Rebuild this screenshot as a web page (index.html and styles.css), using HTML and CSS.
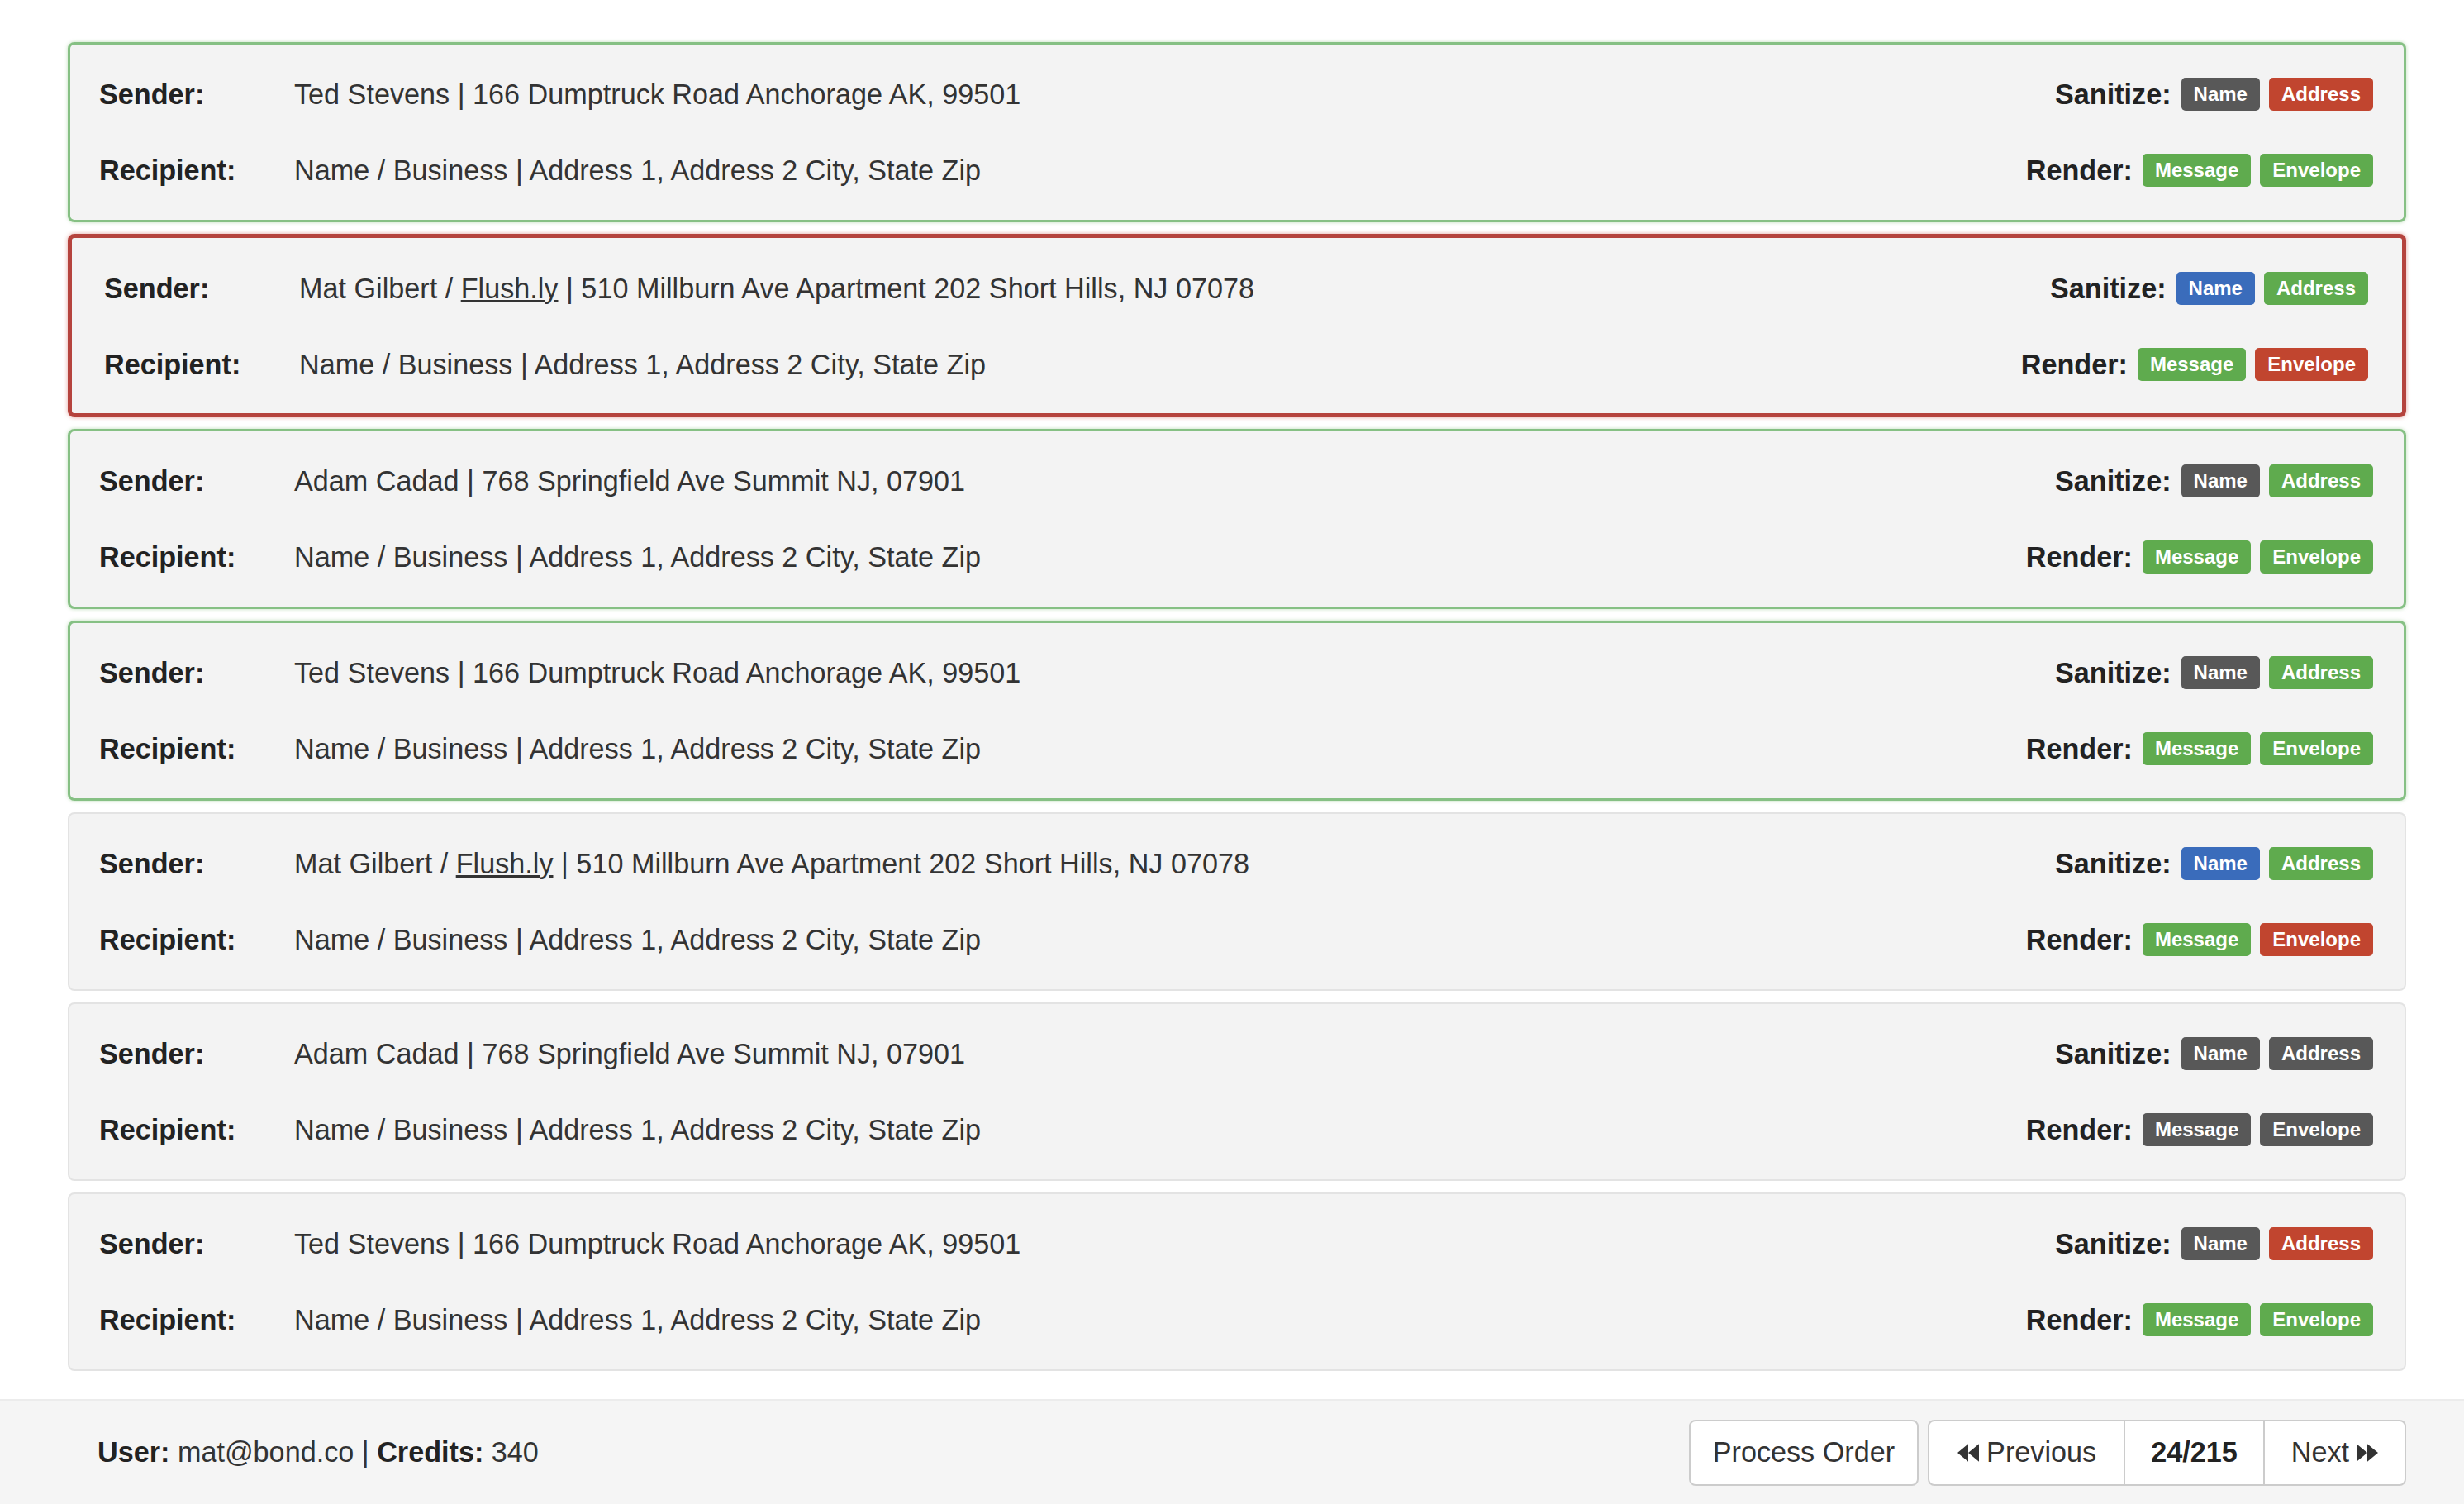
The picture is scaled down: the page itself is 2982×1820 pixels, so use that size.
FILE: index.html
```html
<!DOCTYPE html>
<html>
<head>
<meta charset="utf-8">
<link rel="stylesheet" href="styles.css">
</head>
<body>
<main class="list">
  <section class="card ok">
    <div class="lbl">Sender:</div><div class="val">Ted Stevens | 166 Dumptruck Road Anchorage AK, 99501</div>
    <div class="ctl"><b>Sanitize:</b><span class="badge gray">Name</span><span class="badge red">Address</span></div>
    <div class="lbl">Recipient:</div><div class="val">Name / Business | Address 1, Address 2 City, State Zip</div>
    <div class="ctl"><b>Render:</b><span class="badge green">Message</span><span class="badge green">Envelope</span></div>
  </section>
  <section class="card bad">
    <div class="lbl">Sender:</div><div class="val">Mat Gilbert / <a href="#">Flush.ly</a> | 510 Millburn Ave Apartment 202 Short Hills, NJ 07078</div>
    <div class="ctl"><b>Sanitize:</b><span class="badge blue">Name</span><span class="badge green">Address</span></div>
    <div class="lbl">Recipient:</div><div class="val">Name / Business | Address 1, Address 2 City, State Zip</div>
    <div class="ctl"><b>Render:</b><span class="badge green">Message</span><span class="badge red">Envelope</span></div>
  </section>
  <section class="card ok">
    <div class="lbl">Sender:</div><div class="val">Adam Cadad | 768 Springfield Ave Summit NJ, 07901</div>
    <div class="ctl"><b>Sanitize:</b><span class="badge gray">Name</span><span class="badge green">Address</span></div>
    <div class="lbl">Recipient:</div><div class="val">Name / Business | Address 1, Address 2 City, State Zip</div>
    <div class="ctl"><b>Render:</b><span class="badge green">Message</span><span class="badge green">Envelope</span></div>
  </section>
  <section class="card ok">
    <div class="lbl">Sender:</div><div class="val">Ted Stevens | 166 Dumptruck Road Anchorage AK, 99501</div>
    <div class="ctl"><b>Sanitize:</b><span class="badge gray">Name</span><span class="badge green">Address</span></div>
    <div class="lbl">Recipient:</div><div class="val">Name / Business | Address 1, Address 2 City, State Zip</div>
    <div class="ctl"><b>Render:</b><span class="badge green">Message</span><span class="badge green">Envelope</span></div>
  </section>
  <section class="card">
    <div class="lbl">Sender:</div><div class="val">Mat Gilbert / <a href="#">Flush.ly</a> | 510 Millburn Ave Apartment 202 Short Hills, NJ 07078</div>
    <div class="ctl"><b>Sanitize:</b><span class="badge blue">Name</span><span class="badge green">Address</span></div>
    <div class="lbl">Recipient:</div><div class="val">Name / Business | Address 1, Address 2 City, State Zip</div>
    <div class="ctl"><b>Render:</b><span class="badge green">Message</span><span class="badge red">Envelope</span></div>
  </section>
  <section class="card">
    <div class="lbl">Sender:</div><div class="val">Adam Cadad | 768 Springfield Ave Summit NJ, 07901</div>
    <div class="ctl"><b>Sanitize:</b><span class="badge gray">Name</span><span class="badge gray">Address</span></div>
    <div class="lbl">Recipient:</div><div class="val">Name / Business | Address 1, Address 2 City, State Zip</div>
    <div class="ctl"><b>Render:</b><span class="badge gray">Message</span><span class="badge gray">Envelope</span></div>
  </section>
  <section class="card">
    <div class="lbl">Sender:</div><div class="val">Ted Stevens | 166 Dumptruck Road Anchorage AK, 99501</div>
    <div class="ctl"><b>Sanitize:</b><span class="badge gray">Name</span><span class="badge red">Address</span></div>
    <div class="lbl">Recipient:</div><div class="val">Name / Business | Address 1, Address 2 City, State Zip</div>
    <div class="ctl"><b>Render:</b><span class="badge green">Message</span><span class="badge green">Envelope</span></div>
  </section>
</main>
<footer class="bar">
  <div class="user"><b>User:</b> mat@bond.co | <b>Credits:</b> 340</div>
  <div class="actions">
    <button class="btn">Process Order</button>
    <div class="group">
      <button class="btn prev"><svg class="ico" viewBox="0 0 24 20"><path d="M12 0 L12 20 L0 10 Z M24 0 L24 20 L12 10 Z"/></svg>Previous</button>
      <button class="btn strong">24/215</button>
      <button class="btn next">Next<svg class="ico after" viewBox="0 0 24 20"><path d="M0 0 L0 20 L12 10 Z M12 0 L12 20 L24 10 Z"/></svg></button>
    </div>
  </div>
</footer>
</body>
</html>
```
FILE: styles.css
```css
html, body {
  margin: 0;
  padding: 0;
  background: #ffffff;
}
body {
  font-family: "Liberation Sans", Arial, Helvetica, sans-serif;
  font-size: 34.2px;
  color: #333333;
}
.list {
  display: flex;
  flex-direction: column;
  gap: 14px;
  padding: 51px 70px 34px 82px;
}
.card {
  box-sizing: border-box;
  height: 216px;
  background: #f3f3f3;
  border: 2px solid #e3e3e3;
  border-radius: 8px;
  padding: 35px 38px 35px 36px;
  display: grid;
  grid-template-columns: 236px 1fr auto;
  grid-template-rows: 50px 50px;
  row-gap: 42px;
  align-items: center;
}
.card.ok {
  height: 218px;
  border: 3px solid #86c084;
  box-shadow: 0 0 4px rgba(110, 180, 100, 0.45);
  padding: 35px 37px 35px 35px;
}
.card.bad {
  height: 222px;
  border: 5px solid #b5433d;
  box-shadow: 0 0 5px rgba(200, 70, 60, 0.5);
  padding: 36px 41px 35px 39px;
}
.lbl {
  font-weight: bold;
  color: #222222;
}
.val {
  white-space: nowrap;
}
.val a {
  color: #333333;
  text-decoration: underline;
}
.ctl {
  display: flex;
  align-items: center;
  justify-content: flex-end;
  gap: 11px;
}
.ctl b {
  color: #222222;
  margin-right: 1px;
}
.badge {
  display: inline-block;
  font-size: 24px;
  font-weight: bold;
  line-height: 24px;
  color: #ffffff;
  padding: 8px 15px;
  border-radius: 5px;
}
.gray { background: #585858; }
.red { background: #c1452f; }
.green { background: #5fab4e; }
.blue { background: #3a6cbb; }
.bar {
  box-sizing: border-box;
  height: 127px;
  background: #f5f5f5;
  border-top: 2px solid #ececec;
  display: flex;
  align-items: center;
  justify-content: space-between;
  padding: 0 70px 0 118px;
}
.user b {
  color: #222222;
}
.actions {
  display: flex;
  gap: 11px;
}
.group {
  display: flex;
}
.btn {
  font-family: inherit;
  font-size: 34.2px;
  color: #333333;
  background: #ffffff;
  border: 2px solid #cccccc;
  border-radius: 8px;
  height: 80px;
  padding: 0 27px;
  display: flex;
  align-items: center;
}
.group .btn {
  border-radius: 0;
  margin-left: -2px;
}
.group .btn.prev {
  border-radius: 8px 0 0 8px;
  margin-left: 0;
  padding: 0 33px 0 34px;
}
.group .btn.next {
  border-radius: 0 8px 8px 0;
  padding: 0 32px 0 32px;
}
.group .btn.strong {
  font-weight: bold;
  color: #222222;
  padding: 0 31px;
}
.ico {
  width: 26px;
  height: 22px;
  fill: #333333;
  margin-right: 9px;
}
.ico.after {
  margin-right: 0;
  margin-left: 9px;
}
```
